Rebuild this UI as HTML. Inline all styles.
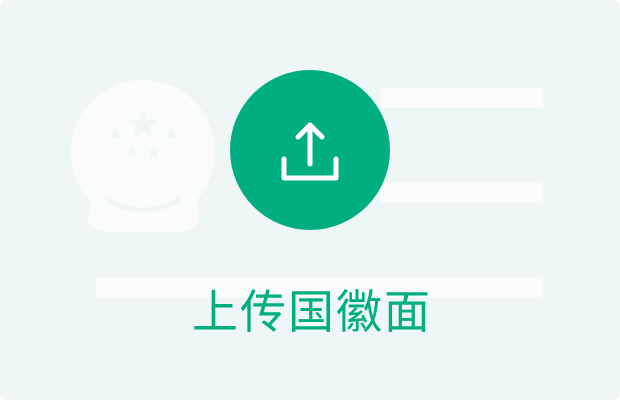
<!DOCTYPE html>
<html><head><meta charset="utf-8"><style>
html,body{margin:0;background:#fff}
.card{position:absolute;left:0;top:0;width:620px;height:400px;background:#eef7f5;border-radius:8px;overflow:hidden}
.bar{position:absolute;background:#fafcfb}
.t{position:absolute;left:2px;width:620px;top:276px;text-align:center;font:46px "Liberation Sans","Noto Sans CJK SC",sans-serif;color:#00ae80;letter-spacing:2px}
</style></head><body><div class="card">
<div class="bar" style="left:380px;top:88px;width:163px;height:20px"></div>
<div class="bar" style="left:380px;top:183px;width:163px;height:20px"></div>
<div class="bar" style="left:96px;top:277px;width:447px;height:20px"></div>
<svg width="620" height="400" style="position:absolute;left:0;top:0">
<circle cx="143" cy="152" r="72" fill="#fafcfb"/>
<path d="M92 195 L196 195 L199 222 Q190 232 180 232 L108 232 Q96 232 88 222 Z" fill="#fafcfb"/>
<path d="M109 200 Q143 220 178 200" stroke="#eef7f5" stroke-width="5" fill="none" stroke-linecap="round"/>
<g fill="#eef7f5">
<polygon points="143,109 147,120 158,120 149,127 153,138 143,131 133,138 137,127 128,120 139,120"/>
<polygon points="115,127 117,132 122,132 118,135 120,140 115,137 110,140 112,135 108,132 113,132"/>
<polygon points="171,127 173,132 178,132 174,135 176,140 171,137 166,140 168,135 164,132 169,132"/>
<polygon points="132,145 134,150 139,150 135,153 137,158 132,155 127,158 129,153 125,150 130,150"/>
<polygon points="154,145 156,150 161,150 157,153 159,158 154,155 149,158 151,153 147,150 152,150"/>
</g>
<circle cx="310" cy="150" r="80" fill="#00ae80"/>
<g stroke="#fff" stroke-width="5" fill="none" stroke-linecap="round" stroke-linejoin="round">
<path d="M310 164 V125 M298 137 L310 125 L322 137"/>
<path d="M284 159 V178 H336 V159"/>
</g>
</svg>
<div class="t">上传国徽面</div>
</div></body></html>
